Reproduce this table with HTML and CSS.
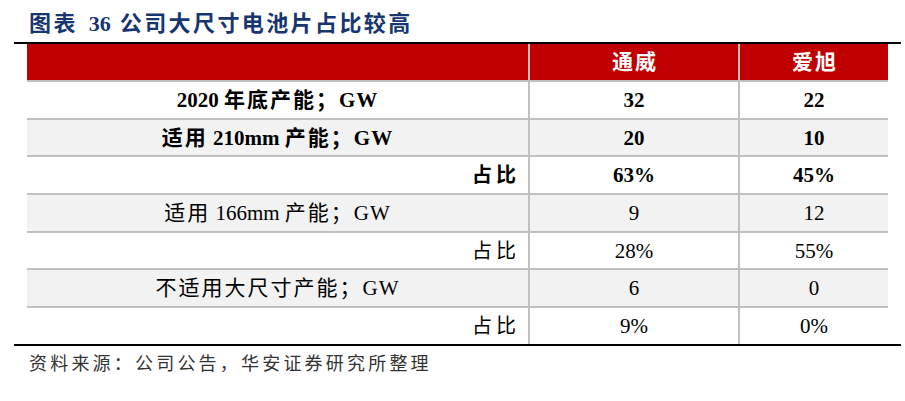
FILE: index.html
```html
<!DOCTYPE html>
<html lang="zh-CN">
<head>
<meta charset="utf-8">
<title>图表 36 公司大尺寸电池片占比较高</title>
<link rel="stylesheet" href="styles.css">
</head>
<body>
<div class="title"><span class="zh">图表</span><span class="t-num">36</span><span class="zh">公司大尺寸电池片占比较高</span></div>
<div class="frame">
  <div class="grid">
    <div class="cell head"></div>
    <div class="cell head"><span class="zh">通威</span></div>
    <div class="cell head"><span class="zh">爱旭</span></div>

    <div class="cell bold">2020 <span class="zh">年底产能；</span><span class="lat">GW</span></div>
    <div class="cell bold">32</div>
    <div class="cell bold">22</div>

    <div class="cell bold alt"><span class="zh">适用</span> 210mm <span class="zh">产能；</span><span class="lat">GW</span></div>
    <div class="cell bold alt">20</div>
    <div class="cell bold alt">10</div>

    <div class="cell bold right"><span class="zh">占比</span></div>
    <div class="cell bold">63%</div>
    <div class="cell bold">45%</div>

    <div class="cell alt"><span class="zh">适用</span> 166mm <span class="zh">产能；</span><span class="lat">GW</span></div>
    <div class="cell alt">9</div>
    <div class="cell alt">12</div>

    <div class="cell right"><span class="zh">占比</span></div>
    <div class="cell">28%</div>
    <div class="cell">55%</div>

    <div class="cell alt"><span class="zh">不适用大尺寸产能；</span><span class="lat">GW</span></div>
    <div class="cell alt">6</div>
    <div class="cell alt">0</div>

    <div class="cell right"><span class="zh">占比</span></div>
    <div class="cell">9%</div>
    <div class="cell">0%</div>
  </div>
</div>
<div class="source">资料来源：公司公告，华安证券研究所整理</div>
</body>
</html>
```
FILE: styles.css
```css
html, body {
  margin: 0;
  padding: 0;
  background: #ffffff;
}

body {
  width: 905px;
  height: 401px;
  overflow: hidden;
  font-family: "Liberation Serif", "Noto Sans CJK SC", serif;
  color: #000000;
}

.zh {
  letter-spacing: 2px;
}

.lat {
  letter-spacing: 1px;
}

.title {
  padding: 9px 0 0 29px;
  height: 33px;
  line-height: 30px;
  font-size: 22px;
  font-weight: bold;
  color: #17366f;
  white-space: nowrap;
}

.title .zh {
  letter-spacing: 2.4px;
}

.t-num {
  margin: 0 9px 0 11px;
}

.frame {
  margin-left: 14px;
  width: 887px;
  border-top: 2px solid #000000;
  border-bottom: 2px solid #000000;
}

.grid {
  margin: 0 13px;
  display: grid;
  grid-template-columns: 501px 208px 148px;
  grid-template-rows: 36px repeat(7, 35.7px);
  column-gap: 2px;
  row-gap: 2px;
  background: #c0c0c0;
}

.cell {
  display: flex;
  align-items: center;
  justify-content: center;
  background: #ffffff;
  font-size: 21px;
  line-height: 24px;
  white-space: pre;
}

.cell.alt {
  background: #f2f2f2;
}

.cell.bold {
  font-weight: bold;
}

.cell.head {
  background: #c00000;
  color: #ffffff;
  font-size: 21px;
  font-weight: bold;
  padding-left: 2px;
}

.cell.right {
  justify-content: flex-end;
  padding-right: 8px;
}

.cell.right .zh {
  letter-spacing: 4px;
}

.cell.right .zh {
  font-size: 20px;
}

.source {
  padding: 6px 0 0 29px;
  line-height: 24px;
  font-size: 18px;
  letter-spacing: 3.2px;
  color: #333333;
  white-space: nowrap;
}
```
